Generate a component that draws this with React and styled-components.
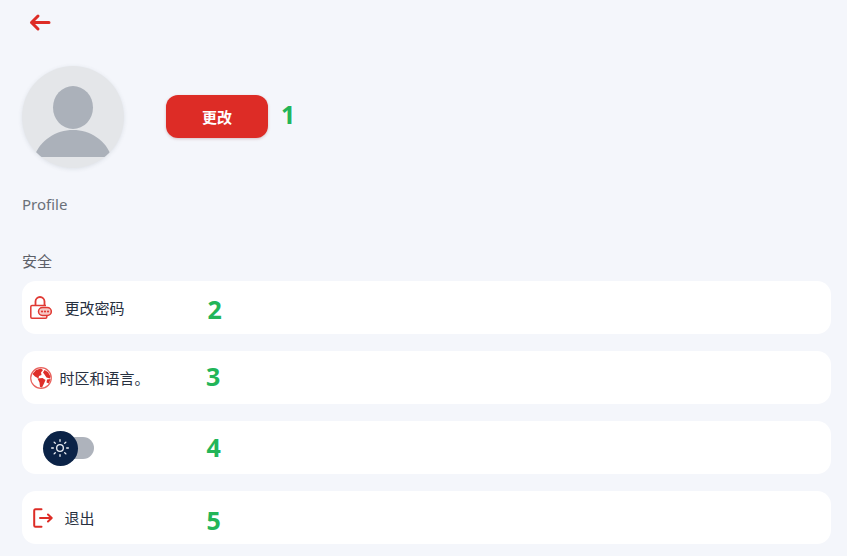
import React from "react";
import styled, { createGlobalStyle } from "styled-components";
import { Sun } from "lucide-react";

const FONT = `"Noto Sans", "Noto Sans CJK SC", sans-serif`;

const GlobalStyle = createGlobalStyle`
  html, body {
    margin: 0;
    padding: 0;
    background: #f4f6fb;
    font-family: ${FONT};
  }
  * {
    box-sizing: border-box;
  }
`;

const Page = styled.div`
  width: 847px;
  height: 556px;
  padding: 12px 16px 0 22px;
  overflow: hidden;
`;

const BackButton = styled.button`
  display: block;
  width: 22px;
  height: 22px;
  margin: 0 0 32px 7px;
  padding: 0;
  border: 0;
  background: none;
  color: #dd2c26;
`;

const AvatarRow = styled.div`
  display: flex;
  align-items: center;
  gap: 42px;
`;

const Avatar = styled.div`
  width: 102px;
  height: 102px;
  border-radius: 50%;
  background: #e4e6e9;
  box-shadow: 0 1px 4px rgba(60, 70, 90, 0.12);
  overflow: hidden;
`;

const ChangeButton = styled.button`
  display: block;
  width: 102px;
  height: 43px;
  margin-top: -1px;
  border: 0;
  border-radius: 12px;
  background: #dd2c26;
  box-shadow: 0 1px 3px rgba(120, 40, 40, 0.25);
  color: #fff;
  font-family: ${FONT};
  font-size: 15px;
  font-weight: 700;
`;

const ProfileName = styled.div`
  margin-top: 26px;
  font-size: 15px;
  line-height: 21px;
  color: #6a7079;
`;

const SectionTitle = styled.div`
  margin: 36px 0 10px;
  font-size: 15px;
  line-height: 20px;
  color: #5c6068;
`;

const List = styled.div`
  display: flex;
  flex-direction: column;
  gap: 17px;
  margin-left: -0.5px;
`;

const Card = styled.div`
  position: relative;
  display: flex;
  align-items: center;
  gap: ${(props) => props.$gap}px;
  height: 53px;
  padding-left: ${(props) => props.$inset}px;
  border-radius: 14px;
  background: #fff;
`;

const Label = styled.span`
  font-size: 15px;
  line-height: 20px;
  color: #27303f;
`;

const Mark = styled.span`
  position: absolute;
  left: ${(props) => props.$x}px;
  top: ${(props) => props.$y}px;
  font-size: 25px;
  line-height: 30px;
  font-weight: 700;
  color: #22b558;
`;

const ButtonWrap = styled.div`
  position: relative;
`;

const Toggle = styled.div`
  position: relative;
  width: 34px;
  height: 22px;
  border-radius: 11px;
  background: #aeb3bc;
`;

const Knob = styled.div`
  position: absolute;
  left: -17px;
  top: -6px;
  display: flex;
  align-items: center;
  justify-content: center;
  width: 35px;
  height: 35px;
  border-radius: 50%;
  background: #0b2347;
  color: #eef1f6;
`;

const BackIcon = () => (
  <svg width="22" height="22" viewBox="0 0 22 22" fill="none" stroke="currentColor" strokeWidth="3" strokeLinecap="round" strokeLinejoin="round">
    <path d="M20 10.5H2.5M9 4L2.5 10.5L9 17" />
  </svg>
);

const PersonIcon = () => (
  <svg width="102" height="102" viewBox="0 0 102 102">
    <ellipse cx="51" cy="41.500" rx="20" ry="21.500" fill="#abb1ba" />
    <path d="M12 91C18 74 34 64 51 64C68 64 84 74 89.500 91Z" fill="#abb1ba" />
  </svg>
);

const LockIcon = () => (
  <svg width="22" height="23" viewBox="0 0 22 23" fill="none" stroke="#e03a34" strokeWidth="1.5">
    <path d="M5.500 9.500V5.500C5.500 3 7.500 1 10 1C12.500 1 14.500 3 14.500 5.500V9.500" strokeWidth="1.8" />
    <path d="M16 9.500H2C1.200 9.500 .8 10 .8 10.800V21C.8 21.800 1.200 22.200 2 22.200H15.500C16.300 22.200 16.800 21.800 16.800 21V19.500" />
    <rect x="8.500" y="11.500" width="12.800" height="8" rx="4" fill="#f6c8c5" />
    <circle cx="12" cy="15.500" r="1.100" fill="#e03a34" stroke="none" />
    <circle cx="15" cy="15.500" r="1.100" fill="#e03a34" stroke="none" />
    <circle cx="18" cy="15.500" r="1.100" fill="#e03a34" stroke="none" />
  </svg>
);

const GlobeIcon = () => (
  <svg width="22" height="22" viewBox="0 0 22 22">
    <circle cx="11" cy="11" r="10.300" fill="#fff" stroke="#e8625d" strokeWidth="1.200" />
    <path d="M2.500 7L6 3L11 1.500L13 3L11 5.500L11.500 8L9 9L8.500 11.500L5 9.500Z" fill="#df2f29" />
    <path d="M7.500 11.500L12.500 11L15.500 13L14 16.500L12 20.500L10 20L9.500 15.500Z" fill="#df2f29" />
    <path d="M14.500 3L18 5L20.500 9.500L20 11.500L16.500 10.500L14.500 7.500L13 5.500Z" fill="#df2f29" />
    <path d="M17 12.500L20.500 12L19 16.500L16.500 15.500Z" fill="#df2f29" />
  </svg>
);

const LogoutIcon = () => (
  <svg width="20" height="20" viewBox="0 0 20 20" fill="none" stroke="#dd2c26" strokeWidth="2" strokeLinecap="round" strokeLinejoin="round">
    <path d="M8.500 1.300H2.500C1.700 1.300 1.200 1.800 1.200 2.600V17.400C1.200 18.200 1.700 18.700 2.500 18.700H8.500" />
    <path d="M7 10H18.500M15 6.500L18.700 10L15 13.500" />
  </svg>
);

export default function App() {
  return (
    <Page>
      <GlobalStyle />
      <BackButton aria-label="back">
        <BackIcon />
      </BackButton>
      <AvatarRow>
        <Avatar>
          <PersonIcon />
        </Avatar>
        <ButtonWrap>
          <ChangeButton>更改</ChangeButton>
          <Mark $x={115} $y={3}>1</Mark>
        </ButtonWrap>
      </AvatarRow>
      <ProfileName>Profile</ProfileName>
      <SectionTitle>安全</SectionTitle>
      <List>
        <Card $inset={8.5} $gap={12.5}>
          <LockIcon />
          <Label>更改密码</Label>
          <Mark $x={186} $y={13}>2</Mark>
        </Card>
        <Card $inset={8.5} $gap={7.5}>
          <GlobeIcon />
          <Label>时区和语言。</Label>
          <Mark $x={184.5} $y={10}>3</Mark>
        </Card>
        <Card $inset={38} $gap={0}>
          <Toggle>
            <Knob>
              <Sun size={20} strokeWidth={1.6} />
            </Knob>
          </Toggle>
          <Mark $x={185} $y={11}>4</Mark>
        </Card>
        <Card $inset={11.5} $gap={11.5}>
          <LogoutIcon />
          <Label>退出</Label>
          <Mark $x={185} $y={14}>5</Mark>
        </Card>
      </List>
    </Page>
  );
}
